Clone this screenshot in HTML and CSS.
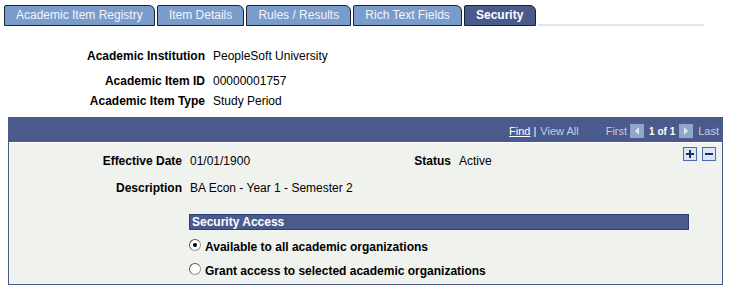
FILE: index.html
```html
<!DOCTYPE html>
<html>
<head>
<meta charset="utf-8">
<link rel="stylesheet" href="styles.css">
</head>
<body>
<div class="tabs">
  <div class="tab">Academic Item Registry</div>
  <div class="tab">Item Details</div>
  <div class="tab">Rules / Results</div>
  <div class="tab">Rich Text Fields</div>
  <div class="tab active">Security</div>
  <div class="tab-rest"></div>
</div>

<div class="head">
  <div class="row r1"><span class="lbl">Academic Institution</span><span class="val">PeopleSoft University</span></div>
  <div class="row r2"><span class="lbl">Academic Item ID</span><span class="val">00000001757</span></div>
  <div class="row r3"><span class="lbl">Academic Item Type</span><span class="val">Study Period</span></div>
</div>

<div class="grid">
  <div class="grid-bar">
    <span class="find">Find</span><span class="sep">|</span><span class="dim">View All</span>
    <span class="dim first">First</span>
    <span class="navbtn"><svg width="14" height="14" viewBox="0 0 14 14"><rect width="14" height="14" fill="#8fa6c8"/><path d="M9 3 L5 7 L9 11 Z" fill="#dfe7f3"/></svg></span>
    <span class="count">1 of 1</span>
    <span class="navbtn"><svg width="14" height="14" viewBox="0 0 14 14"><rect width="14" height="14" fill="#8fa6c8"/><path d="M5 3 L9 7 L5 11 Z" fill="#dfe7f3"/></svg></span>
    <span class="dim last">Last</span>
  </div>
  <div class="grid-body">
    <div class="line l1">
      <span class="glbl">Effective Date</span><span class="gval date">01/01/1900</span>
      <span class="slbl">Status</span><span class="gval">Active</span>
      <span class="btns">
        <span class="pm"><svg width="14" height="14" viewBox="0 0 14 14"><rect x="0.5" y="0.5" width="13" height="13" fill="#dbe6f7" stroke="#4a6aa8"/><path d="M3 7 H11 M7 3 V11" stroke="#1c2f66" stroke-width="2"/></svg></span>
        <span class="pm"><svg width="14" height="14" viewBox="0 0 14 14"><rect x="0.5" y="0.5" width="13" height="13" fill="#dbe6f7" stroke="#4a6aa8"/><path d="M3 7 H11" stroke="#1c2f66" stroke-width="2"/></svg></span>
      </span>
    </div>
    <div class="line l2">
      <span class="glbl">Description</span><span class="gval">BA Econ - Year 1 - Semester 2</span>
    </div>
    <div class="sec">
      <div class="sec-bar">Security Access</div>
      <label class="opt o1"><span class="radio on"></span>Available to all academic organizations</label>
      <label class="opt o2"><span class="radio"></span>Grant access to selected academic organizations</label>
    </div>
  </div>
</div>
</body>
</html>
```

FILE: styles.css
```css
html, body {
  margin: 0;
  padding: 0;
  background: #ffffff;
  font-family: Arial, "Liberation Sans", sans-serif;
  font-size: 12px;
  color: #000;
}

.tabs {
  display: flex;
  align-items: flex-end;
  gap: 2px;
  margin: 5px 0 0 4px;
  height: 21px;
}
.tab {
  height: 19px;
  line-height: 19px;
  padding: 0 11.2px 0 11px;
  background: #7a9ccc;
  color: #f2f5fb;
  border: 1px solid #1e2230;
  border-radius: 2px 6px 0 0;
  white-space: nowrap;
}
.tab.active {
  background: #4b5a8c;
  color: #ffffff;
  font-weight: bold;
}
.tab-rest {
  width: 166px;
  height: 0;
  border-bottom: 2px solid #dce6f4;
}

.head {
  margin-top: 20px;
}
.row {
  display: flex;
  height: 20px;
  align-items: center;
}
.r2 { margin-top: 5px; }
.lbl {
  width: 213px;
  text-align: right;
  font-weight: bold;
  padding-right: 8px;
  box-sizing: border-box;
}

.grid {
  margin: 6px 7px 0 8px;
  border: 1px solid #4b5a8c;
}
.grid-bar {
  background: #4b5a8c;
  height: 24px;
  display: flex;
  align-items: center;
  justify-content: flex-end;
  padding: 2px 3px 0 0;
  box-sizing: border-box;
  color: #fff;
  font-size: 11px;
}
.find {
  color: #fff;
  text-decoration: underline;
}
.sep { color: #fff; margin: 0 4px 0 3px; }
.dim { color: #c5cde2; }
.first { margin-left: 27px; margin-right: 3px; }
.navbtn { display: inline-flex; }
.count {
  font-weight: bold;
  color: #fff;
  margin: 0 4px 0 5px;
  font-size: 10px;
}
.last { margin-left: 5px; }

.grid-body {
  background: #f0f2ee;
  border-top: 1px solid #ffffff;
  height: 142px;
  position: relative;
  padding-top: 8px;
  box-sizing: border-box;
}
.line {
  display: flex;
  align-items: center;
  height: 20px;
}
.l2 { margin-top: 7px; }
.glbl {
  width: 181px;
  text-align: right;
  font-weight: bold;
  padding-right: 8px;
  box-sizing: border-box;
}
.date { width: 196px; }
.slbl {
  font-weight: bold;
  width: 73px;
  text-align: right;
  padding-right: 8px;
  box-sizing: border-box;
}
.btns {
  position: absolute;
  right: 6px;
  top: 4px;
  display: flex;
  gap: 5px;
}
.pm { display: inline-flex; }

.sec {
  margin: 16px 0 0 180px;
  width: 500px;
}
.sec-bar {
  background: #4b5a8c;
  border: 1px solid #2e3e78;
  color: #fff;
  font-weight: bold;
  height: 14px;
  line-height: 14px;
  padding-left: 2px;
}
.opt {
  display: flex;
  align-items: center;
  font-weight: bold;
  height: 20px;
}
.o1 { margin-top: 7px; }
.o2 { margin-top: 4px; }
.radio {
  width: 10px;
  height: 10px;
  border-radius: 50%;
  background: #fff;
  border: 1px solid #9a9a9a;
  border-top-color: #5a5a5a;
  border-left-color: #5a5a5a;
  margin: -4px 4px 0 0;
  position: relative;
  box-sizing: content-box;
}
.radio.on::after {
  content: "";
  position: absolute;
  left: 3px;
  top: 3px;
  width: 4px;
  height: 4px;
  border-radius: 50%;
  background: #000;
}
```
